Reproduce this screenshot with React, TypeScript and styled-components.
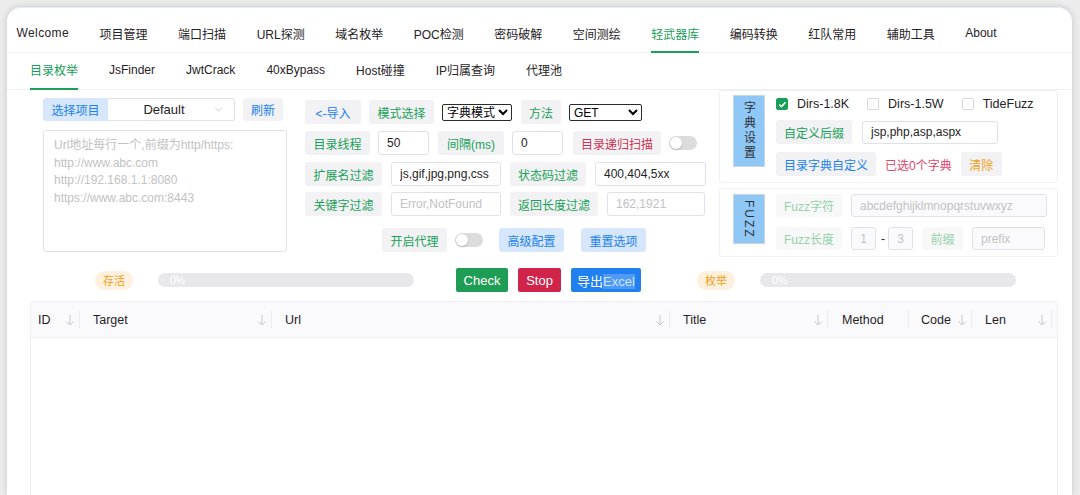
import React from "react";
import styled, { createGlobalStyle, css } from "styled-components";
import { ChevronDown } from "lucide-react";

const FONT = `"Liberation Sans", "Noto Sans CJK SC", sans-serif`;

const GlobalStyle = createGlobalStyle`
  * { box-sizing: border-box; }
  html, body { margin: 0; padding: 0; height: 100%; overflow: hidden; background: #ececec; }
  body { font-family: ${FONT}; font-size: 12px; color: #1f2225; }
  #root { height: 100%; }
  input, select, textarea, button { font-family: ${FONT}; }
`;

const Window = styled.div`
  margin: 7px 8px 0 7px;
  height: 488px;
  background: #fff;
  border-radius: 14px 14px 0 0;
  border-top: 1px solid #e4edf8;
  box-shadow: 0 0 7px rgba(0, 0, 0, 0.16);
  overflow: hidden;
  display: flex;
  flex-direction: column;
`;

const MainTabs = styled.nav`
  flex: none;
  height: 45px;
  display: flex;
  gap: 30.5px;
  padding: 6px 0 0 9.5px;
  border-bottom: 1px solid #efeff5;
  font-size: 12px;
`;

const SubTabs = styled.nav`
  flex: none;
  height: 37px;
  display: flex;
  gap: 31px;
  padding: 0 0 3px 23px;
  border-bottom: 1px solid #efeff5;
  font-size: 12px;
`;

const Tab = styled.div<{ $active?: boolean; $wide?: boolean }>`
  position: relative;
  display: flex;
  align-items: center;
  height: 100%;
  white-space: nowrap;
  letter-spacing: ${(p) => (p.$wide ? "0.4px" : "0")};
  color: ${(p) => (p.$active ? "#18a058" : "#1f2225")};
  ${(p) =>
    p.$active &&
    css`
      &::after {
        content: "";
        position: absolute;
        left: 0;
        right: 0;
        bottom: -1px;
        height: 2px;
        background: #18a058;
      }
    `}
`;

const SubTab = styled(Tab)`
  &::after {
    bottom: -4px;
  }
`;

const TopArea = styled.div`
  flex: none;
  display: flex;
  align-items: flex-start;
  padding-left: 36px;
`;

const LeftCol = styled.div`
  width: 244px;
  margin-top: 8px;
  display: flex;
  flex-direction: column;
  gap: 9px;
`;

const ProjectRow = styled.div`
  display: flex;
  align-items: center;
  height: 23px;
`;

const Addon = styled.div`
  width: 65px;
  height: 23px;
  display: flex;
  align-items: center;
  justify-content: center;
  background: #d7e7fb;
  color: #2080f0;
  border-radius: 3px 0 0 3px;
`;

const SelectBox = styled.div`
  width: 127px;
  height: 23px;
  display: flex;
  align-items: center;
  padding-left: 8px;
  border: 1px solid #e0e0e6;
  border-left: none;
  border-radius: 0 3px 3px 0;
  font-size: 13px;
  color: #1f2225;
  svg {
    margin-right: 9px;
    color: #c2c2c2;
  }
`;

const SelectText = styled.span`
  flex: 1;
  text-align: center;
`;

const UrlArea = styled.textarea`
  width: 244px;
  height: 122px;
  margin: 0;
  resize: none;
  border: 1px solid #e0e0e6;
  border-radius: 3px;
  padding: 6px 10px;
  font-size: 12px;
  line-height: 17.5px;
  outline: none;
  &::placeholder {
    color: #c2c2c2;
  }
`;

const MidCol = styled.div`
  width: 401px;
  margin: 10px 0 0 18px;
  display: flex;
  flex-direction: column;
  gap: 7px;
`;

const Row = styled.div<{ $gap?: number; $indent?: number; $top?: number }>`
  display: flex;
  align-items: center;
  height: 24px;
  gap: ${(p) => p.$gap ?? 8}px;
  padding-left: ${(p) => p.$indent ?? 0}px;
  margin-top: ${(p) => p.$top ?? 0}px;
  white-space: nowrap;
`;

const toneColor: Record<string, string> = {
  green: "#18a058",
  blue: "#2080f0",
  red: "#d03050",
  orange: "#f0a020",
  faded: "#94d1ae",
};

const Btn = styled.button<{ $w: number; $tone: string; $soft?: boolean; $h?: number }>`
  flex: none;
  width: ${(p) => p.$w}px;
  height: ${(p) => p.$h ?? 24}px;
  padding: 0;
  border: none;
  border-radius: 3px;
  font-size: 12px;
  white-space: nowrap;
  background: ${(p) => (p.$soft ? "#d7e7fb" : p.$tone === "faded" ? "#f8f8f9" : "#f2f2f4")};
  color: ${(p) => toneColor[p.$tone]};
`;

const Field = styled.input<{ $w: number; $h?: number; $disabled?: boolean; $center?: boolean }>`
  flex: none;
  width: ${(p) => p.$w}px;
  height: ${(p) => p.$h ?? 24}px;
  margin: 0;
  padding: 0 ${(p) => (p.$center ? 0 : 8)}px;
  text-align: ${(p) => (p.$center ? "center" : "left")};
  border: 1px solid #e0e0e6;
  border-radius: 3px;
  font-size: 12px;
  color: ${(p) => (p.$disabled ? "#c2c2c2" : "#1f2225")};
  background: ${(p) => (p.$disabled ? "#fafafc" : "#fff")};
  outline: none;
  &::placeholder {
    color: #c2c2c2;
  }
`;

const NativeSelect = styled.select<{ $w: number }>`
  flex: none;
  width: ${(p) => p.$w}px;
  height: 17px;
  padding: 0;
  font-size: 12px;
  color: #000;
  border: 1px solid #2b2b2b;
  border-radius: 2px;
  background: #fff;
`;

const Toggle = styled.span`
  flex: none;
  width: 28px;
  height: 14px;
  border-radius: 7px;
  background: #dcdcdc;
  display: flex;
  align-items: center;
  padding-left: 1px;
  &::after {
    content: "";
    width: 12px;
    height: 12px;
    border-radius: 50%;
    background: #fff;
    box-shadow: 0 1px 2px rgba(0, 0, 0, 0.2);
  }
`;

const RightCol = styled.div`
  width: 339px;
  margin-left: 13px;
  display: flex;
  flex-direction: column;
  gap: 5px;
`;

const Panel = styled.div<{ $h: number; $pt: number }>`
  height: ${(p) => p.$h}px;
  border: 1px solid #efeff5;
  border-radius: 3px;
  display: flex;
  align-items: flex-start;
  padding: ${(p) => p.$pt}px 0 0 13px;
  gap: 11px;
`;

const SideLabel = styled.div<{ $h: number; $spacing: number }>`
  flex: none;
  width: 32px;
  height: ${(p) => p.$h}px;
  background: #8fc8f6;
  border: 1px solid #c9d6e2;
  display: flex;
  align-items: center;
  justify-content: center;
  writing-mode: vertical-rl;
  letter-spacing: ${(p) => p.$spacing}px;
  font-size: 12px;
  color: #2b2f33;
`;

const PanelBody = styled.div<{ $pt?: number; $gap: number }>`
  display: flex;
  flex-direction: column;
  gap: ${(p) => p.$gap}px;
  padding-top: ${(p) => p.$pt ?? 0}px;
`;

const CheckRow = styled.div`
  display: flex;
  align-items: center;
  height: 16px;
  gap: 18px;
`;

const CheckItem = styled.label`
  display: flex;
  align-items: center;
  gap: 9px;
  font-size: 12.5px;
  color: #1f2225;
`;

const Box = styled.span<{ $on?: boolean }>`
  width: 12px;
  height: 12px;
  border-radius: 2px;
  display: flex;
  align-items: center;
  justify-content: center;
  background: ${(p) => (p.$on ? "#18a058" : "#fff")};
  border: 1px solid ${(p) => (p.$on ? "#18a058" : "#d6d6dc")};
`;

const Note = styled.span<{ $color: string }>`
  color: ${(p) => p.$color};
  font-size: 12px;
`;

const Dash = styled.span`
  width: 2px;
  font-size: 12px;
  color: #1f2225;
  text-align: center;
`;

const ProgressRow = styled.div`
  flex: none;
  display: flex;
  align-items: center;
  height: 24px;
  margin-top: 11px;
  padding-left: 88px;
`;

const Badge = styled.span<{ $gapAfter: number }>`
  flex: none;
  width: 38px;
  height: 19px;
  border-radius: 10px;
  background: #fdf0dc;
  color: #f0a020;
  font-size: 11px;
  display: flex;
  align-items: center;
  justify-content: center;
  margin-right: ${(p) => p.$gapAfter}px;
`;

const Bar = styled.div<{ $gapAfter: number }>`
  flex: none;
  width: 256px;
  height: 14px;
  border-radius: 7px;
  background: #e8e8ea;
  color: #fff;
  font-size: 10.5px;
  display: flex;
  align-items: center;
  padding-left: 12px;
  margin-right: ${(p) => p.$gapAfter}px;
`;

const Solid = styled.button<{ $bg: string; $w: number; $gapAfter: number }>`
  flex: none;
  width: ${(p) => p.$w}px;
  height: 24px;
  padding: 0;
  border: none;
  border-radius: 2px;
  background: ${(p) => p.$bg};
  color: #fff;
  font-size: 13px;
  margin-right: ${(p) => p.$gapAfter}px;
  white-space: nowrap;
`;

const Selected = styled.span`
  background: #4d9bf5;
  color: #cfe3ff;
`;

const Table = styled.div`
  flex: 1;
  margin: 9px 14px 0 23px;
  border: 1px solid #efeff5;
  border-bottom: none;
  border-radius: 3px 3px 0 0;
  display: flex;
  flex-direction: column;
`;

const HeadRow = styled.div`
  flex: none;
  display: grid;
  grid-template-columns: 49px 192px 398px 158px 81px 63px 80px 1fr;
  height: 36px;
  background: #fafafc;
  border-bottom: 1px solid #efeff5;
`;

const HeadCell = styled.div<{ $pl?: number; $sep?: boolean }>`
  position: relative;
  display: flex;
  align-items: center;
  padding: 0 5px 0 ${(p) => p.$pl ?? 13}px;
  font-size: 12.5px;
  color: #1f2225;
  ${(p) =>
    p.$sep !== false &&
    css`
      &::after {
        content: "";
        position: absolute;
        right: 0;
        top: 9px;
        bottom: 9px;
        width: 1px;
        background: #ebebf0;
      }
    `}
  svg {
    margin-left: auto;
  }
`;

const SortArrow = () => (
  <svg width="10" height="12" viewBox="0 0 10 12" fill="none" stroke="#c6c6cc" strokeWidth="1">
    <path d="M5 1v10M1.5 7.5L5 11l3.5-3.5" />
  </svg>
);

const Tick = () => (
  <svg width="9" height="9" viewBox="0 0 9 9" fill="none" stroke="#fff" strokeWidth="1.6">
    <path d="M1.5 4.6l2 2 4-4.4" />
  </svg>
);

const mainTabs = ["Welcome", "项目管理", "端口扫描", "URL探测", "域名枚举", "POC检测", "密码破解", "空间测绘", "轻武器库", "编码转换", "红队常用", "辅助工具", "About"];
const subTabs = ["目录枚举", "JsFinder", "JwtCrack", "40xBypass", "Host碰撞", "IP归属查询", "代理池"];

const columns: { name: string; pl?: number; sort: boolean }[] = [
  { name: "ID", pl: 7, sort: true },
  { name: "Target", sort: true },
  { name: "Url", sort: true },
  { name: "Title", sort: true },
  { name: "Method", pl: 14, sort: false },
  { name: "Code", pl: 12, sort: true },
  { name: "Len", sort: true },
];

export default function App() {
  return (
    <>
      <GlobalStyle />
      <Window>
        <MainTabs>
          {mainTabs.map((t) => (
            <Tab key={t} $active={t === "轻武器库"} $wide={t === "Welcome"}>
              {t}
            </Tab>
          ))}
        </MainTabs>
        <SubTabs>
          {subTabs.map((t) => (
            <SubTab key={t} $active={t === "目录枚举"}>
              {t}
            </SubTab>
          ))}
        </SubTabs>

        <TopArea>
          <LeftCol>
            <ProjectRow>
              <Addon>选择项目</Addon>
              <SelectBox>
                <SelectText>Default</SelectText>
                <ChevronDown size={13} strokeWidth={1.5} />
              </SelectBox>
              <Btn $w={40} $h={23} $tone="blue" style={{ marginLeft: 8 }}>
                刷新
              </Btn>
            </ProjectRow>
            <UrlArea
              placeholder={"Url地址每行一个,前缀为http/https:\nhttp://www.abc.com\nhttp://192.168.1.1:8080\nhttps://www.abc.com:8443"}
            />
          </LeftCol>

          <MidCol>
            <Row>
              <Btn $w={56} $tone="blue">&lt;-导入</Btn>
              <Btn $w={65} $tone="green">模式选择</Btn>
              <NativeSelect $w={70} defaultValue="dict">
                <option value="dict">字典模式</option>
                <option value="fuzz">Fuzz模式</option>
              </NativeSelect>
              <Btn $w={40} $tone="green" style={{ marginLeft: 1 }}>方法</Btn>
              <NativeSelect $w={73} defaultValue="GET">
                <option value="GET">GET</option>
                <option value="POST">POST</option>
                <option value="HEAD">HEAD</option>
              </NativeSelect>
            </Row>
            <Row $gap={8}>
              <Btn $w={65} $tone="green">目录线程</Btn>
              <Field $w={51} defaultValue="50" />
              <Btn $w={66} $tone="green" style={{ marginLeft: 1 }}>间隔(ms)</Btn>
              <Field $w={51} defaultValue="0" />
              <Btn $w={88} $tone="red" style={{ marginLeft: 2 }}>目录递归扫描</Btn>
              <Toggle />
            </Row>
            <Row $gap={9}>
              <Btn $w={77} $tone="green">扩展名过滤</Btn>
              <Field $w={110} defaultValue="js,gif,jpg,png,css" />
              <Btn $w={76} $tone="green">状态码过滤</Btn>
              <Field $w={111} defaultValue="400,404,5xx" />
            </Row>
            <Row $gap={9} style={{ marginTop: -1 }}>
              <Btn $w={77} $tone="green">关键字过滤</Btn>
              <Field $w={110} placeholder="Error,NotFound" />
              <Btn $w={88} $tone="green">返回长度过滤</Btn>
              <Field $w={98} placeholder="162,1921" />
            </Row>
            <Row $gap={8} $indent={77} $top={5}>
              <Btn $w={65} $tone="green">开启代理</Btn>
              <Toggle />
              <Btn $w={65} $tone="blue" $soft style={{ marginLeft: 8 }}>高级配置</Btn>
              <Btn $w={65} $tone="blue" $soft style={{ marginLeft: 9 }}>重置选项</Btn>
            </Row>
          </MidCol>

          <RightCol>
            <Panel $h={93} $pt={4}>
              <SideLabel $h={72} $spacing={3}>字典设置</SideLabel>
              <PanelBody $pt={1} $gap={8}>
                <CheckRow>
                  <CheckItem>
                    <Box $on>
                      <Tick />
                    </Box>
                    Dirs-1.8K
                  </CheckItem>
                  <CheckItem>
                    <Box />
                    Dirs-1.5W
                  </CheckItem>
                  <CheckItem>
                    <Box />
                    TideFuzz
                  </CheckItem>
                </CheckRow>
                <Row $gap={10}>
                  <Btn $w={76} $tone="green">自定义后缀</Btn>
                  <Field $w={136} $h={23} defaultValue="jsp,php,asp,aspx" />
                </Row>
                <Row $gap={9}>
                  <Btn $w={100} $tone="blue">目录字典自定义</Btn>
                  <Note $color="#e0456a">已选0个字典</Note>
                  <Btn $w={41} $tone="orange">清除</Btn>
                </Row>
              </PanelBody>
            </Panel>
            <Panel $h={69} $pt={5}>
              <SideLabel $h={50} $spacing={2}>FUZZ</SideLabel>
              <PanelBody $gap={10}>
                <Row $gap={9} style={{ height: 23 }}>
                  <Btn $w={66} $h={23} $tone="faded">Fuzz字符</Btn>
                  <Field $w={196} $h={23} $disabled disabled placeholder="abcdefghijklmnopqrstuvwxyz" />
                </Row>
                <Row $gap={9} style={{ height: 23 }}>
                  <Btn $w={66} $h={23} $tone="faded">Fuzz长度</Btn>
                  <Row $gap={5} style={{ height: 23 }}>
                    <Field $w={25} $h={23} $disabled $center disabled defaultValue="1" />
                    <Dash>-</Dash>
                    <Field $w={25} $h={23} $disabled $center disabled defaultValue="3" />
                  </Row>
                  <Btn $w={41} $h={23} $tone="faded">前缀</Btn>
                  <Field $w={73} $h={23} $disabled disabled placeholder="prefix" />
                </Row>
              </PanelBody>
            </Panel>
          </RightCol>
        </TopArea>

        <ProgressRow>
          <Badge $gapAfter={25}>存活</Badge>
          <Bar $gapAfter={42}>0%</Bar>
          <Solid $bg="#1f9d55" $w={52} $gapAfter={10}>Check</Solid>
          <Solid $bg="#d0244a" $w={43} $gapAfter={10}>Stop</Solid>
          <Solid $bg="#2080f0" $w={70} $gapAfter={56}>
            导出<Selected>Excel</Selected>
          </Solid>
          <Badge $gapAfter={25}>枚举</Badge>
          <Bar $gapAfter={0}>0%</Bar>
        </ProgressRow>

        <Table>
          <HeadRow>
            {columns.map((c) => (
              <HeadCell key={c.name} $pl={c.pl}>
                {c.name}
                {c.sort && <SortArrow />}
              </HeadCell>
            ))}
            <HeadCell $sep={false} />
          </HeadRow>
        </Table>
      </Window>
    </>
  );
}
